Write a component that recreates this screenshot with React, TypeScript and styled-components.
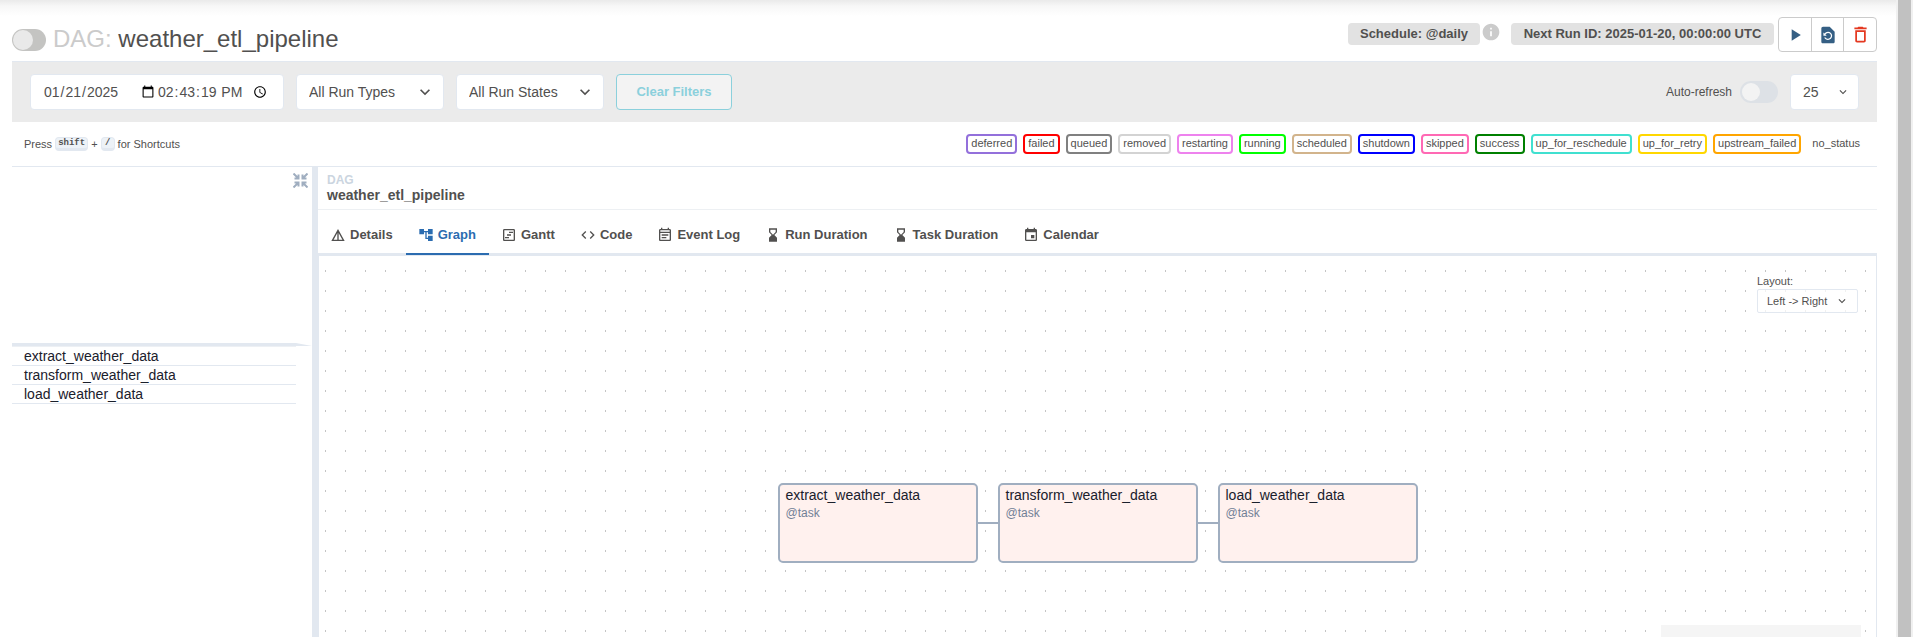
import React, { useState } from "react";
import styled, { createGlobalStyle } from "styled-components";
import type { IconType } from "react-icons";
import {
  MdAccountTree,
  MdCode,
  MdDeleteOutline,
  MdDetails,
  MdEvent,
  MdHourglassBottom,
  MdInfo,
  MdOutlineEventNote,
  MdOutlineViewTimeline,
  MdPlayArrow,
  MdRestorePage,
} from "react-icons/md";

const sans = `"Liberation Sans", Arial, sans-serif`;
const line = "#e2e8f0";
const ink = "#51504f";

const GlobalStyle = createGlobalStyle`
  *, *::before, *::after { box-sizing: border-box; }
  body {
    margin: 0;
    background: #fff;
    color: ${ink};
    font: 14px/20px ${sans};
    overflow: hidden;
  }
  button, input, select { font: inherit; color: inherit; }
  h1, h2, p { margin: 0; }
`;

const Page = styled.div`
  display: flex;
  height: 100vh;
  overflow: hidden;
`;

const Content = styled.main`
  flex: 1;
  min-width: 0;
  padding: 0 19px 0 12px;
  background: linear-gradient(#eaeaea, #f7f7f7 6px, #fff 16px) top / 100% 16px no-repeat;
`;

const ScrollTrack = styled.div`
  width: 17px;
  padding: 0 2px;
  background: #f0f0f0;
`;

const ScrollThumb = styled.div`
  height: 100%;
  background: #c1c1c1;
`;

const Header = styled.header`
  display: flex;
  justify-content: space-between;
  height: 61px;
  padding-top: 17px;
`;

const TitleGroup = styled.div`
  display: flex;
  align-items: center;
  gap: 7px;
  height: 46px;
`;

const Title = styled.h1`
  padding-bottom: 3px;
  font-size: 24px;
  line-height: 26px;
  font-weight: 400;
  span { color: #cbcbcb; }
`;

const Switch = styled.input<{ $track: string; $knob: string; $width: number; $inset: number }>`
  appearance: none;
  display: flex;
  align-items: center;
  width: ${(p) => p.$width}px;
  height: 22px;
  margin: 0;
  padding: ${(p) => p.$inset}px;
  border-radius: 11px;
  background: ${(p) => p.$track};
  &::before {
    content: "";
    height: 100%;
    aspect-ratio: 1;
    border-radius: 50%;
    background: ${(p) => p.$knob};
  }
  &:checked { justify-content: flex-end; }
`;

const Meta = styled.div`
  display: flex;
  align-items: flex-start;
`;

const Tag = styled.span<{ $width: number }>`
  min-width: ${(p) => p.$width}px;
  height: 22px;
  margin-top: 6px;
  border-radius: 4px;
  background: #e2e2e2;
  font-weight: 700;
  font-size: 13px;
  line-height: 21px;
  text-align: center;
`;

const InfoIcon = styled(MdInfo)`
  margin: 5px 10px 0 1px;
  color: #cbcbcb;
`;

const ButtonGroup = styled.div`
  display: flex;
  width: 99px;
  height: 35px;
  margin-left: 4px;
  border: 1px solid #cbcbcb;
  border-radius: 4px;
`;

const IconButton = styled.button<{ $color?: string }>`
  display: flex;
  flex: 1;
  align-items: center;
  justify-content: center;
  padding: 0;
  border: 0;
  background: none;
  color: ${(p) => p.$color ?? "#355f84"};
  & + & { border-left: 1px solid #cbcbcb; }
`;

const FilterBar = styled.section`
  display: flex;
  align-items: center;
  gap: 12px;
  height: 61px;
  padding: 0 18px;
  border-top: 1px solid ${line};
  background: #ebebeb;
`;

const DateBox = styled.div`
  display: flex;
  align-items: center;
  width: 254px;
  height: 36px;
  padding: 0 12px;
  border: 1px solid ${line};
  border-radius: 4px;
  background: #fff;
  input {
    padding: 0;
    border: 0;
    background: none;
    outline: 0;
  }
`;

const DateInput = styled.input`
  width: 114px;
`;

const TimeInput = styled.input`
  width: 114px;
`;

const SelectBox = styled.span<{ $width: number; $small?: boolean }>`
  display: grid;
  align-items: center;
  width: ${(p) => p.$width}px;
  height: ${(p) => (p.$small ? 24 : 36)}px;
  font-size: ${(p) => (p.$small ? 11 : 14)}px;
  > * { grid-area: 1 / 1; }
  svg {
    justify-self: end;
    margin-right: 9px;
    pointer-events: none;
  }
  select {
    appearance: none;
    width: 100%;
    height: 100%;
    padding: 0 ${(p) => (p.$small ? 9 : 12)}px;
    border: 1px solid ${line};
    border-radius: ${(p) => (p.$small ? 2 : 4)}px;
    background: ${(p) => (p.$small ? "rgba(255, 255, 255, 0.75)" : "#fff")};
  }
`;

const ClearButton = styled.button`
  width: 116px;
  height: 36px;
  border: 1px solid #8bd0dc;
  border-radius: 4px;
  background: #f3f3f3;
  color: #8bd0dc;
  font-weight: 700;
  font-size: 13px;
`;

const Spacer = styled.div`
  flex: 1;
`;

const RefreshLabel = styled.label`
  display: flex;
  align-items: center;
  gap: 8px;
  font-size: 12px;
`;

const LegendRow = styled.section`
  display: flex;
  align-items: center;
  justify-content: space-between;
  height: 44px;
  padding: 0 12px;
  font-size: 11px;
`;

const Shortcuts = styled.p`
  display: flex;
  align-items: center;
  gap: 3px;
`;

const Key = styled.kbd`
  min-width: 14px;
  padding: 1px 2px 0;
  border: 1px solid ${line};
  border-bottom-width: 3px;
  border-radius: 4px;
  background: #edf2f7;
  font: 700 9px/9px "Liberation Mono", monospace;
  text-align: center;
`;

const Legend = styled.div`
  display: flex;
  gap: 6px;
`;

const StateBadge = styled.span<{ $color: string }>`
  height: 20px;
  padding: 0 3px;
  border: 2px solid ${(p) => p.$color};
  border-radius: 4px;
  line-height: 15px;
`;

const Workspace = styled.section`
  display: flex;
  border-top: 1px solid ${line};
`;

const GridPanel = styled.aside`
  width: 300px;
`;

const GridTools = styled.div`
  display: flex;
  justify-content: flex-end;
  height: 176px;
  padding: 3px 2px 0 0;
`;

const CollapseButton = styled.button`
  display: flex;
  align-items: center;
  justify-content: center;
  width: 20px;
  height: 20px;
  padding: 0;
  border: 0;
  background: none;
  color: #a0aec0;
`;

const GridEdge = styled.div`
  height: 3px;
  background: ${line};
  clip-path: polygon(0 0, 284px 0, 100% 100%, 0 100%);
`;

const TaskTable = styled.table`
  width: 284px;
  border-spacing: 0;
  border-top: 1px solid #edf0f4;
  color: #1a202c;
  td {
    padding: 0 12px;
    border-bottom: 1px solid ${line};
    line-height: 18px;
  }
`;

const Splitter = styled.div`
  width: 6px;
  background: ${line};
`;

const Detail = styled.div`
  flex: 1;
  min-width: 0;
`;

const Crumb = styled.div`
  height: 43px;
  padding: 6px 9px 0;
  border-bottom: 1px solid #edf0f3;
  font-weight: 700;
  span {
    display: block;
    color: #cbd5e0;
    font-size: 12px;
    line-height: 15px;
  }
  h2 {
    font-size: 14px;
    line-height: 14px;
  }
`;

const Tabs = styled.div`
  display: flex;
  height: 46px;
  border-bottom: 3px solid ${line};
`;

const Tab = styled.button<{ $active?: boolean }>`
  display: flex;
  align-items: center;
  gap: 4px;
  height: 45px;
  padding: 7px 13px 0 12px;
  border: 0;
  border-bottom: 2px solid ${(p) => (p.$active ? "#2b6cb0" : "transparent")};
  background: none;
  color: ${(p) => (p.$active ? "#2b6cb0" : ink)};
  font-weight: 700;
  font-size: 13px;
  line-height: 16px;
`;

const Canvas = styled.div`
  position: relative;
  display: flex;
  align-items: center;
  justify-content: center;
  height: 532px;
  padding-top: 2px;
  border: solid ${line};
  border-width: 0 1px;
`;

const Dots = styled.svg`
  position: absolute;
  inset: 0;
  width: 100%;
  height: 100%;
`;

const LayoutPicker = styled.label`
  position: absolute;
  top: 18px;
  right: 18px;
  display: flex;
  flex-direction: column;
  font-size: 11px;
  line-height: 15px;
`;

const Minimap = styled.div`
  position: absolute;
  right: 15px;
  bottom: 13px;
  width: 200px;
  height: 150px;
  background: #f5f5f5;
`;

const Flow = styled.div`
  position: relative;
  display: flex;
  align-items: center;
`;

const Node = styled.article`
  width: 200px;
  height: 80px;
  padding: 0 6px;
  border: 2px solid #a0aec0;
  border-radius: 5px;
  background: #fff1ee;
  color: #1a202c;
  p {
    color: #718096;
    font-size: 12px;
    line-height: 16px;
  }
`;

const Edge = styled.div`
  width: 20px;
  height: 2px;
  background: #a0aec0;
`;

const states: [string, string][] = [
  ["deferred", "mediumpurple"],
  ["failed", "red"],
  ["queued", "gray"],
  ["removed", "lightgrey"],
  ["restarting", "violet"],
  ["running", "lime"],
  ["scheduled", "tan"],
  ["shutdown", "blue"],
  ["skipped", "hotpink"],
  ["success", "green"],
  ["up_for_reschedule", "turquoise"],
  ["up_for_retry", "gold"],
  ["upstream_failed", "orange"],
  ["no_status", "transparent"],
];

const tabs: [string, IconType][] = [
  ["Details", MdDetails],
  ["Graph", MdAccountTree],
  ["Gantt", MdOutlineViewTimeline],
  ["Code", MdCode],
  ["Event Log", MdOutlineEventNote],
  ["Run Duration", MdHourglassBottom],
  ["Task Duration", MdHourglassBottom],
  ["Calendar", MdEvent],
];

const tasks = ["extract_weather_data", "transform_weather_data", "load_weather_data"];

function Chevron({ size }: { size: number }) {
  return (
    <svg width={size} height={size} viewBox="0 0 24 24" fill="currentColor" aria-hidden="true">
      <path d="M16.59 8.59L12 13.17 7.41 8.59 6 10l6 6 6-6z" />
    </svg>
  );
}

function CollapseIcon() {
  return (
    <svg width="15" height="15" viewBox="0 0 15 15" fill="none" stroke="currentColor" strokeWidth="2" aria-hidden="true">
      <path d="M.5.5 5 5M1.5 5.5h4v-4M14.5.5 10 5M13.5 5.5h-4v-4M.5 14.5 5 10M1.5 9.5h4v4M14.5 14.5 10 10M13.5 9.5h-4v4" />
    </svg>
  );
}

interface SelectProps {
  value: string;
  label: string;
  width: number;
  small?: boolean;
  chevron?: number;
}

function Select({ value, label, width, small, chevron = 20 }: SelectProps) {
  return (
    <SelectBox $width={width} $small={small}>
      <select aria-label={label}>
        <option>{value}</option>
      </select>
      <Chevron size={chevron} />
    </SelectBox>
  );
}

export default function App() {
  const [active, setActive] = useState("Graph");
  return (
    <>
      <GlobalStyle />
      <Page>
        <Content>
          <Header>
            <TitleGroup>
              <Switch
                type="checkbox"
                aria-label="Pause or unpause DAG"
                $width={34}
                $inset={1}
                $track="#c4c4c2"
                $knob="#e9e9e9"
              />
              <Title>
                <span>DAG:</span> weather_etl_pipeline
              </Title>
            </TitleGroup>
            <Meta>
              <Tag $width={132}>Schedule: @daily</Tag>
              <InfoIcon size={20} />
              <Tag $width={263}>Next Run ID: 2025-01-20, 00:00:00 UTC</Tag>
              <ButtonGroup>
                <IconButton aria-label="Trigger DAG"><MdPlayArrow size={20} /></IconButton>
                <IconButton aria-label="Reparse DAG"><MdRestorePage size={20} /></IconButton>
                <IconButton aria-label="Delete DAG" $color="#e43921"><MdDeleteOutline size={21} /></IconButton>
              </ButtonGroup>
            </Meta>
          </Header>

          <FilterBar>
            <DateBox>
              <DateInput type="date" aria-label="Date" defaultValue="2025-01-21" />
              <TimeInput type="time" aria-label="Time" step={1} defaultValue="14:43:19" />
            </DateBox>
            <Select label="Run types" value="All Run Types" width={148} />
            <Select label="Run states" value="All Run States" width={148} />
            <ClearButton>Clear Filters</ClearButton>
            <Spacer />
            <RefreshLabel>
              Auto-refresh
              <Switch type="checkbox" $width={38} $inset={2} $track="#dde1e6" $knob="#f3f3f3" />
            </RefreshLabel>
            <Select label="Number of runs" value="25" width={69} chevron={14} />
          </FilterBar>

          <LegendRow>
            <Shortcuts>
              Press <Key>shift</Key> + <Key>/</Key> for Shortcuts
            </Shortcuts>
            <Legend>
              {states.map(([name, color]) => (
                <StateBadge key={name} $color={color}>{name}</StateBadge>
              ))}
            </Legend>
          </LegendRow>

          <Workspace>
            <GridPanel>
              <GridTools>
                <CollapseButton aria-label="Collapse grid"><CollapseIcon /></CollapseButton>
              </GridTools>
              <GridEdge />
              <TaskTable>
                <tbody>
                  {tasks.map((task) => (
                    <tr key={task}><td>{task}</td></tr>
                  ))}
                </tbody>
              </TaskTable>
            </GridPanel>
            <Splitter />
            <Detail>
              <Crumb>
                <span>DAG</span>
                <h2>weather_etl_pipeline</h2>
              </Crumb>
              <Tabs role="tablist">
                {tabs.map(([name, Icon]) => (
                  <Tab
                    key={name}
                    role="tab"
                    aria-selected={name === active}
                    $active={name === active}
                    onClick={() => setActive(name)}
                  >
                    <Icon size={16} />
                    {name}
                  </Tab>
                ))}
              </Tabs>
              <Canvas>
                <Dots aria-hidden="true">
                  <pattern id="dots" width="20" height="20" patternUnits="userSpaceOnUse">
                    <rect x="6" y="14" width="1" height="2" fill="#c4c4c4" />
                  </pattern>
                  <rect width="100%" height="100%" fill="url(#dots)" />
                </Dots>
                <Flow>
                  {tasks.map((task, i) => (
                    <React.Fragment key={task}>
                      {i > 0 && <Edge />}
                      <Node>
                        {task}
                        <p>@task</p>
                      </Node>
                    </React.Fragment>
                  ))}
                </Flow>
                <LayoutPicker>
                  Layout:
                  <Select label="Layout" value="Left -> Right" width={101} small chevron={14} />
                </LayoutPicker>
                <Minimap />
              </Canvas>
            </Detail>
          </Workspace>
        </Content>
        <ScrollTrack>
          <ScrollThumb />
        </ScrollTrack>
      </Page>
    </>
  );
}
